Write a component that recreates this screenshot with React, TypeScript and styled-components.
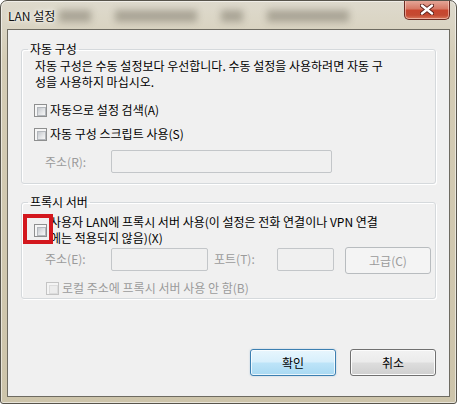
import React from "react";
import styled, { createGlobalStyle } from "styled-components";

const GlobalStyle = createGlobalStyle`
	html, body {
		margin: 0;
		padding: 0;
		background: #ffffff;
	}
	body {
		font-family: "Noto Sans CJK KR", "Noto Sans", sans-serif;
		font-size: 12px;
		color: #000000;
	}
	* {
		box-sizing: border-box;
	}
`;

const Window = styled.div`
	width: 457px;
	height: 404px;
	border: 1px solid #57544b;
	border-radius: 7px 7px 3px 3px;
	background: linear-gradient(#dedacd, #d4ccb5 60px, #cdc4aa);
	box-shadow: inset 0 0 0 1px rgba(255, 255, 255, 0.55);
	padding: 0 6px 6px 6px;
	display: flex;
	flex-direction: column;
	overflow: hidden;
`;

const TitleBar = styled.div`
	height: 28px;
	display: flex;
	align-items: flex-start;
`;

const Title = styled.div`
	padding: 7px 0 0 1px;
	line-height: 16px;
	font-size: 12px;
	color: #111;
	text-shadow: 0 0 6px #ffffff, 0 0 3px #ffffff;
	white-space: nowrap;
`;

const Blur = styled.div`
	display: flex;
	align-items: center;
	gap: 24px;
	margin: 9px 0 0 4px;
	filter: blur(3.5px);
	opacity: 0.45;
`;

const Blob = styled.span<{ $w: number }>`
	display: block;
	width: ${(p) => p.$w}px;
	height: 12px;
	background: #6f6a5c;
`;

const CloseButton = styled.div`
	margin-left: auto;
	margin-top: -1px;
	width: 46px;
	height: 20px;
	border: 1px solid #6c2b22;
	border-top: none;
	border-radius: 0 0 5px 5px;
	background: linear-gradient(#e6ab9d 0%, #d77a66 45%, #c8462f 55%, #c44a32 80%, #d9785c 100%);
	box-shadow: inset 0 0 0 1px rgba(255, 220, 210, 0.55);
	display: flex;
	align-items: center;
	justify-content: center;
`;

const Client = styled.div`
	flex: 1;
	background: #f0f0f0;
	border: 1px solid #6e6b61;
	display: flex;
	flex-direction: column;
	padding: 11px 13px 20px 13px;
`;

const Group = styled.fieldset<{ $top?: number }>`
	margin: ${(p) => p.$top ?? 0}px 0 0 0;
	padding: 0;
	min-width: 0;
	border: 1px solid #d5d9dc;
	border-radius: 3px;
	box-shadow: inset 1px 1px 0 #ffffff, 1px 1px 0 #ffffff;
`;

const Legend = styled.legend`
	margin-left: 6px;
	padding: 0 2px;
	line-height: 16px;
	font-size: 12px;
`;

const GroupBody = styled.div<{ $pt: number; $pb: number }>`
	padding: ${(p) => p.$pt}px 13px ${(p) => p.$pb}px 13px;
	display: flex;
	flex-direction: column;
`;

const Text = styled.div`
	line-height: 16px;
	white-space: nowrap;
`;

const CheckRow = styled.label<{ $top: number; $indent?: number; $disabled?: boolean }>`
	display: flex;
	align-items: center;
	margin-top: ${(p) => p.$top}px;
	margin-left: ${(p) => p.$indent ?? -1}px;
	line-height: 16px;
	white-space: nowrap;
	color: ${(p) => (p.$disabled ? "#9b9b9b" : "#000")};
`;

const BoxWrap = styled.span`
	position: relative;
	display: flex;
	flex-shrink: 0;
	margin-right: 3px;
`;

const Box = styled.span<{ $disabled?: boolean }>`
	display: block;
	width: 13px;
	height: 13px;
	border: 1px solid ${(p) => (p.$disabled ? "#c4c4c4" : "#8e8f8f")};
	background: ${(p) => (p.$disabled ? "#f4f4f4" : "#f6f6f6")};
	padding: 2px;
	&::after {
		content: "";
		display: block;
		width: 100%;
		height: 100%;
		border: 1px solid ${(p) => (p.$disabled ? "#dcdcdc" : "#b3b7bc")};
		background: ${(p) =>
			p.$disabled ? "#ececec" : "linear-gradient(135deg, #c4c8cd 0%, #e2e4e6 55%, #f6f6f6 100%)"};
	}
`;

const RedMark = styled.span`
	position: absolute;
	left: -11px;
	top: -10px;
	width: 30px;
	height: 30px;
	border: 4px solid #d3171d;
	z-index: 2;
`;

const FieldRow = styled.div<{ $top: number }>`
	display: flex;
	align-items: flex-start;
	margin-top: ${(p) => p.$top}px;
	padding-left: 10px;
`;

const FieldLabel = styled.span<{ $w: number; $ml?: number }>`
	width: ${(p) => p.$w}px;
	margin-left: ${(p) => p.$ml ?? 0}px;
	flex-shrink: 0;
	color: #9b9b9b;
	line-height: 16px;
	padding-top: 4px;
	white-space: nowrap;
`;

const Input = styled.div<{ $w: number; $mt?: number }>`
	width: ${(p) => p.$w}px;
	height: 23px;
	margin-top: ${(p) => p.$mt ?? 0}px;
	border: 1px solid #c3c6c9;
	border-radius: 2px;
	background: #f0f0f0;
	flex-shrink: 0;
`;

const AdvancedButton = styled.div`
	width: 86px;
	height: 27px;
	margin-left: 11px;
	border: 1px solid #b8bcbf;
	border-radius: 3px;
	background: #f4f4f4;
	color: #9b9b9b;
	display: flex;
	align-items: center;
	justify-content: center;
	flex-shrink: 0;
`;

const ButtonRow = styled.div`
	margin-top: auto;
	display: flex;
	justify-content: flex-end;
	gap: 14px;
`;

const DialogButton = styled.button<{ $primary?: boolean }>`
	width: 86px;
	height: 27px;
	padding: 0;
	font-family: "Noto Sans CJK KR", "Noto Sans", sans-serif;
	font-size: 12px;
	color: #000;
	border-radius: 3px;
	border: 1px solid ${(p) => (p.$primary ? "#3c7fb1" : "#707070")};
	background: ${(p) =>
		p.$primary
			? "linear-gradient(#e8f6fd 0%, #d7effc 48%, #bde4f8 52%, #a9d9f2 100%)"
			: "linear-gradient(#f2f2f2 0%, #ebebeb 48%, #dddddd 52%, #cfcfcf 100%)"};
	box-shadow: inset 0 0 0 1px ${(p) => (p.$primary ? "rgba(255,255,255,0.75)" : "#fcfcfc")}
		${(p) => (p.$primary ? ", 0 0 2px rgba(60,127,177,0.35)" : "")};
`;

const CloseIcon = () => (
	<svg width="14" height="11" viewBox="0 0 14 11">
		<path d="M2 1.5 L12 9.5 M12 1.5 L2 9.5" stroke="#5a1f18" strokeWidth="4.2" strokeLinecap="round" />
		<path d="M2 1.5 L12 9.5 M12 1.5 L2 9.5" stroke="#ffffff" strokeWidth="2.4" strokeLinecap="round" />
	</svg>
);

const Check = ({ disabled, marked }: { disabled?: boolean; marked?: boolean }) => (
	<BoxWrap>
		<Box $disabled={disabled} />
		{marked && <RedMark />}
	</BoxWrap>
);

const App = () => {
	return (
		<>
			<GlobalStyle />
			<Window>
				<TitleBar>
					<Title>LAN 설정</Title>
					<Blur>
						<Blob $w={32} />
						<Blob $w={82} />
						<Blob $w={22} />
						<Blob $w={82} />
					</Blur>
					<CloseButton>
						<CloseIcon />
					</CloseButton>
				</TitleBar>
				<Client>
					<Group>
						<Legend>자동 구성</Legend>
						<GroupBody $pt={1} $pb={10}>
							<Text>
								자동 구성은 수동 설정보다 우선합니다. 수동 설정을 사용하려면 자동 구
								<br />
								성을 사용하지 마십시오.
							</Text>
							<CheckRow $top={12}>
								<Check />
								자동으로 설정 검색(A)
							</CheckRow>
							<CheckRow $top={8}>
								<Check />
								자동 구성 스크립트 사용(S)
							</CheckRow>
							<FieldRow $top={8}>
								<FieldLabel $w={66}>주소(R):</FieldLabel>
								<Input $w={221} />
							</FieldRow>
						</GroupBody>
					</Group>
					<Group $top={10}>
						<Legend>프록시 서버</Legend>
						<GroupBody $pt={4} $pb={2}>
							<CheckRow $top={0}>
								<Check marked />
								<Text>
									사용자 LAN에 프록시 서버 사용(이 설정은 전화 연결이나 VPN 연결
									<br />
									에는 적용되지 않음)(X)
								</Text>
							</CheckRow>
							<FieldRow $top={1}>
								<FieldLabel $w={66}>주소(E):</FieldLabel>
								<Input $w={97} $mt={1} />
								<FieldLabel $w={63} $ml={6}>
									포트(T):
								</FieldLabel>
								<Input $w={57} $mt={1} />
								<AdvancedButton>고급(C)</AdvancedButton>
							</FieldRow>
							<CheckRow $top={6} $indent={11} $disabled>
								<Check disabled />
								로컬 주소에 프록시 서버 사용 안 함(B)
							</CheckRow>
						</GroupBody>
					</Group>
					<ButtonRow>
						<DialogButton $primary>확인</DialogButton>
						<DialogButton>취소</DialogButton>
					</ButtonRow>
				</Client>
			</Window>
		</>
	);
};

export default App;
